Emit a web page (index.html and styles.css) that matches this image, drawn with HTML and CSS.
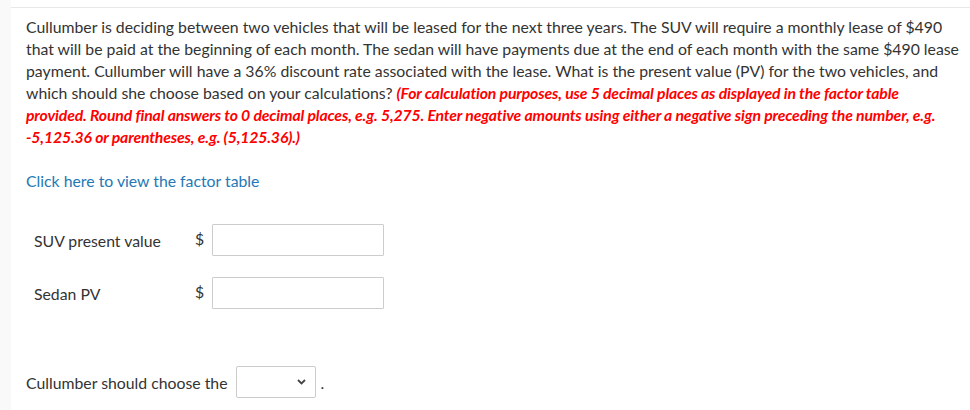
FILE: index.html
```html
<!DOCTYPE html>
<html>
<head>
<meta charset="utf-8">
<link rel="stylesheet" href="styles.css">
</head>
<body>
<div class="page">
  <div class="strip"></div>
  <div class="main">
    <p class="question">Cullumber is deciding between two vehicles that will be leased for the next three years. The SUV will require a monthly lease of $490 that will be paid at the beginning of each month. The sedan will have payments due at the end of each month with the same $490 lease payment. Cullumber will have a 36% discount rate associated with the lease. What is the present value (PV) for the two vehicles, and which should she choose based on your calculations? <em class="note">(For calculation purposes, use 5 decimal places as displayed in the factor table provided. Round final answers to 0 decimal places, e.g. 5,275. Enter negative amounts using either a negative sign preceding the number, e.g. -5,125.36 or parentheses, e.g. (5,125.36).)</em></p>
    <a class="link" href="#">Click here to view the factor table</a>
    <div class="rows">
      <div class="row">
        <span class="label">SUV present value</span>
        <span class="dollar">$</span>
        <span class="input"></span>
      </div>
      <div class="row">
        <span class="label">Sedan PV</span>
        <span class="dollar">$</span>
        <span class="input"></span>
      </div>
    </div>
    <div class="choose">
      <span>Cullumber should choose the</span>
      <span class="select">
        <svg class="chev" width="9" height="6" viewBox="0 0 9 6"><path d="M1 1 L4.5 4.5 L8 1" fill="none" stroke="#444" stroke-width="1.8"/></svg>
      </span>
      <span class="dot">.</span>
    </div>
  </div>
</div>
</body>
</html>
```
FILE: styles.css
```css
html, body {
  margin: 0;
  padding: 0;
  background: #fff;
}
.page {
  display: flex;
  width: 970px;
  height: 410px;
  overflow: hidden;
}
.strip {
  width: 11px;
  flex: none;
  background: #f9f9f9;
}
.main {
  flex: 1;
  margin-top: 7px;
  border-top: 1px solid #e8e8e8;
  padding: 8px 0 0 15px;
  font-family: Lato, "Open Sans", sans-serif;
  font-size: 15.8px;
  color: #333;
}
.question {
  margin: 0;
  line-height: 22px;
  width: 935px;
}
.note {
  color: #f00;
  font-weight: bold;
  font-style: italic;
  letter-spacing: -0.15px;
}
.link {
  display: block;
  margin-top: 22px;
  color: #2578b5;
  text-decoration: none;
  line-height: 22px;
}
.rows {
  margin-top: 32px;
  padding-left: 8px;
  display: flex;
  flex-direction: column;
  gap: 21px;
}
.row {
  display: flex;
  align-items: center;
  height: 32px;
}
.label {
  width: 161px;
}
.dollar {
  width: 17px;
  position: relative;
  top: -2px;
}
.input {
  width: 170px;
  height: 30px;
  border: 1px solid #ccc;
  border-radius: 1px;
}
.choose {
  margin-top: 57px;
  display: flex;
  align-items: center;
  height: 32px;
}
.select {
  margin-left: 8px;
  width: 78px;
  height: 30px;
  border: 1px solid #ccc;
  border-radius: 2px;
  display: flex;
  align-items: center;
  justify-content: flex-end;
}
.chev {
  margin-right: 9px;
}
.dot {
  margin-left: 5px;
}
```
